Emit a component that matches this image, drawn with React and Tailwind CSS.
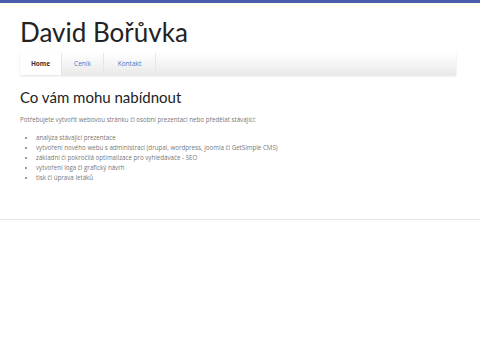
import React from "react";

const items = [
  "analýza stávající prezentace",
  "vytvoření nového webu s administrací (drupal, wordpress, joomla či GetSimple CMS)",
  "základní či pokročilá optimalizace pro vyhledávače - SEO",
  "vytvoření loga či grafický návrh",
  "tisk či úprava letáků",
];

export default function App() {
  return (
    <div
      className="min-h-[360px] bg-white text-[#222]"
      style={{ fontFamily: '"Open Sans", "Noto Sans", sans-serif' }}
    >
      {/* top stripe */}
      <div className="h-[3px] bg-[#4b5cb0]" />
      <div className="h-[4px] bg-gradient-to-b from-[#fbfde8] to-white" />

      <div className="px-[20px]">
        {/* site title */}
        <h1
          className="mt-[8px] text-[26px] leading-[34px] text-[#222]"
          style={{ fontFamily: 'Lato, "Open Sans", sans-serif' }}
        >
          David Bořůvka
        </h1>

        {/* nav */}
        <div className="mt-[4px] mr-[4px] flex h-[22px] bg-gradient-to-b from-white to-[#e9e9e9] shadow-[0_1px_2px_rgba(0,0,0,0.12)]">
          <div className="flex w-[42px] items-center justify-center bg-white text-[6.5px] font-bold text-[#333] border-r border-[#e6e6e6]">
            Home
          </div>
          <div className="flex w-[42px] items-center justify-center text-[6.5px] text-[#3a7bc8] border-r border-[#e6e6e6]">
            Ceník
          </div>
          <div className="flex w-[52px] items-center justify-center text-[6.5px] text-[#3a7bc8] border-r border-[#e6e6e6]">
            Kontakt
          </div>
        </div>

        {/* content */}
        <h2
          className="mt-[11px] text-[15px] leading-[23px] text-[#222]"
          style={{ fontFamily: 'Lato, "Open Sans", sans-serif' }}
        >
          Co vám mohu nabídnout
        </h2>

        <p className="mt-[6px] text-[6.2px] leading-[10px] text-[#777]">
          Potřebujete vytvořit webovou stránku či osobní prezentaci nebo předělat stávající:
        </p>

        <ul className="mt-[8px] pl-[16px] list-disc text-[6.2px] leading-[10px] text-[#777]">
          {items.map((item) => (
            <li key={item}>{item}</li>
          ))}
        </ul>
      </div>

      <div className="mt-[36px] h-[1px] bg-[#e6e6e6]" />
    </div>
  );
}
